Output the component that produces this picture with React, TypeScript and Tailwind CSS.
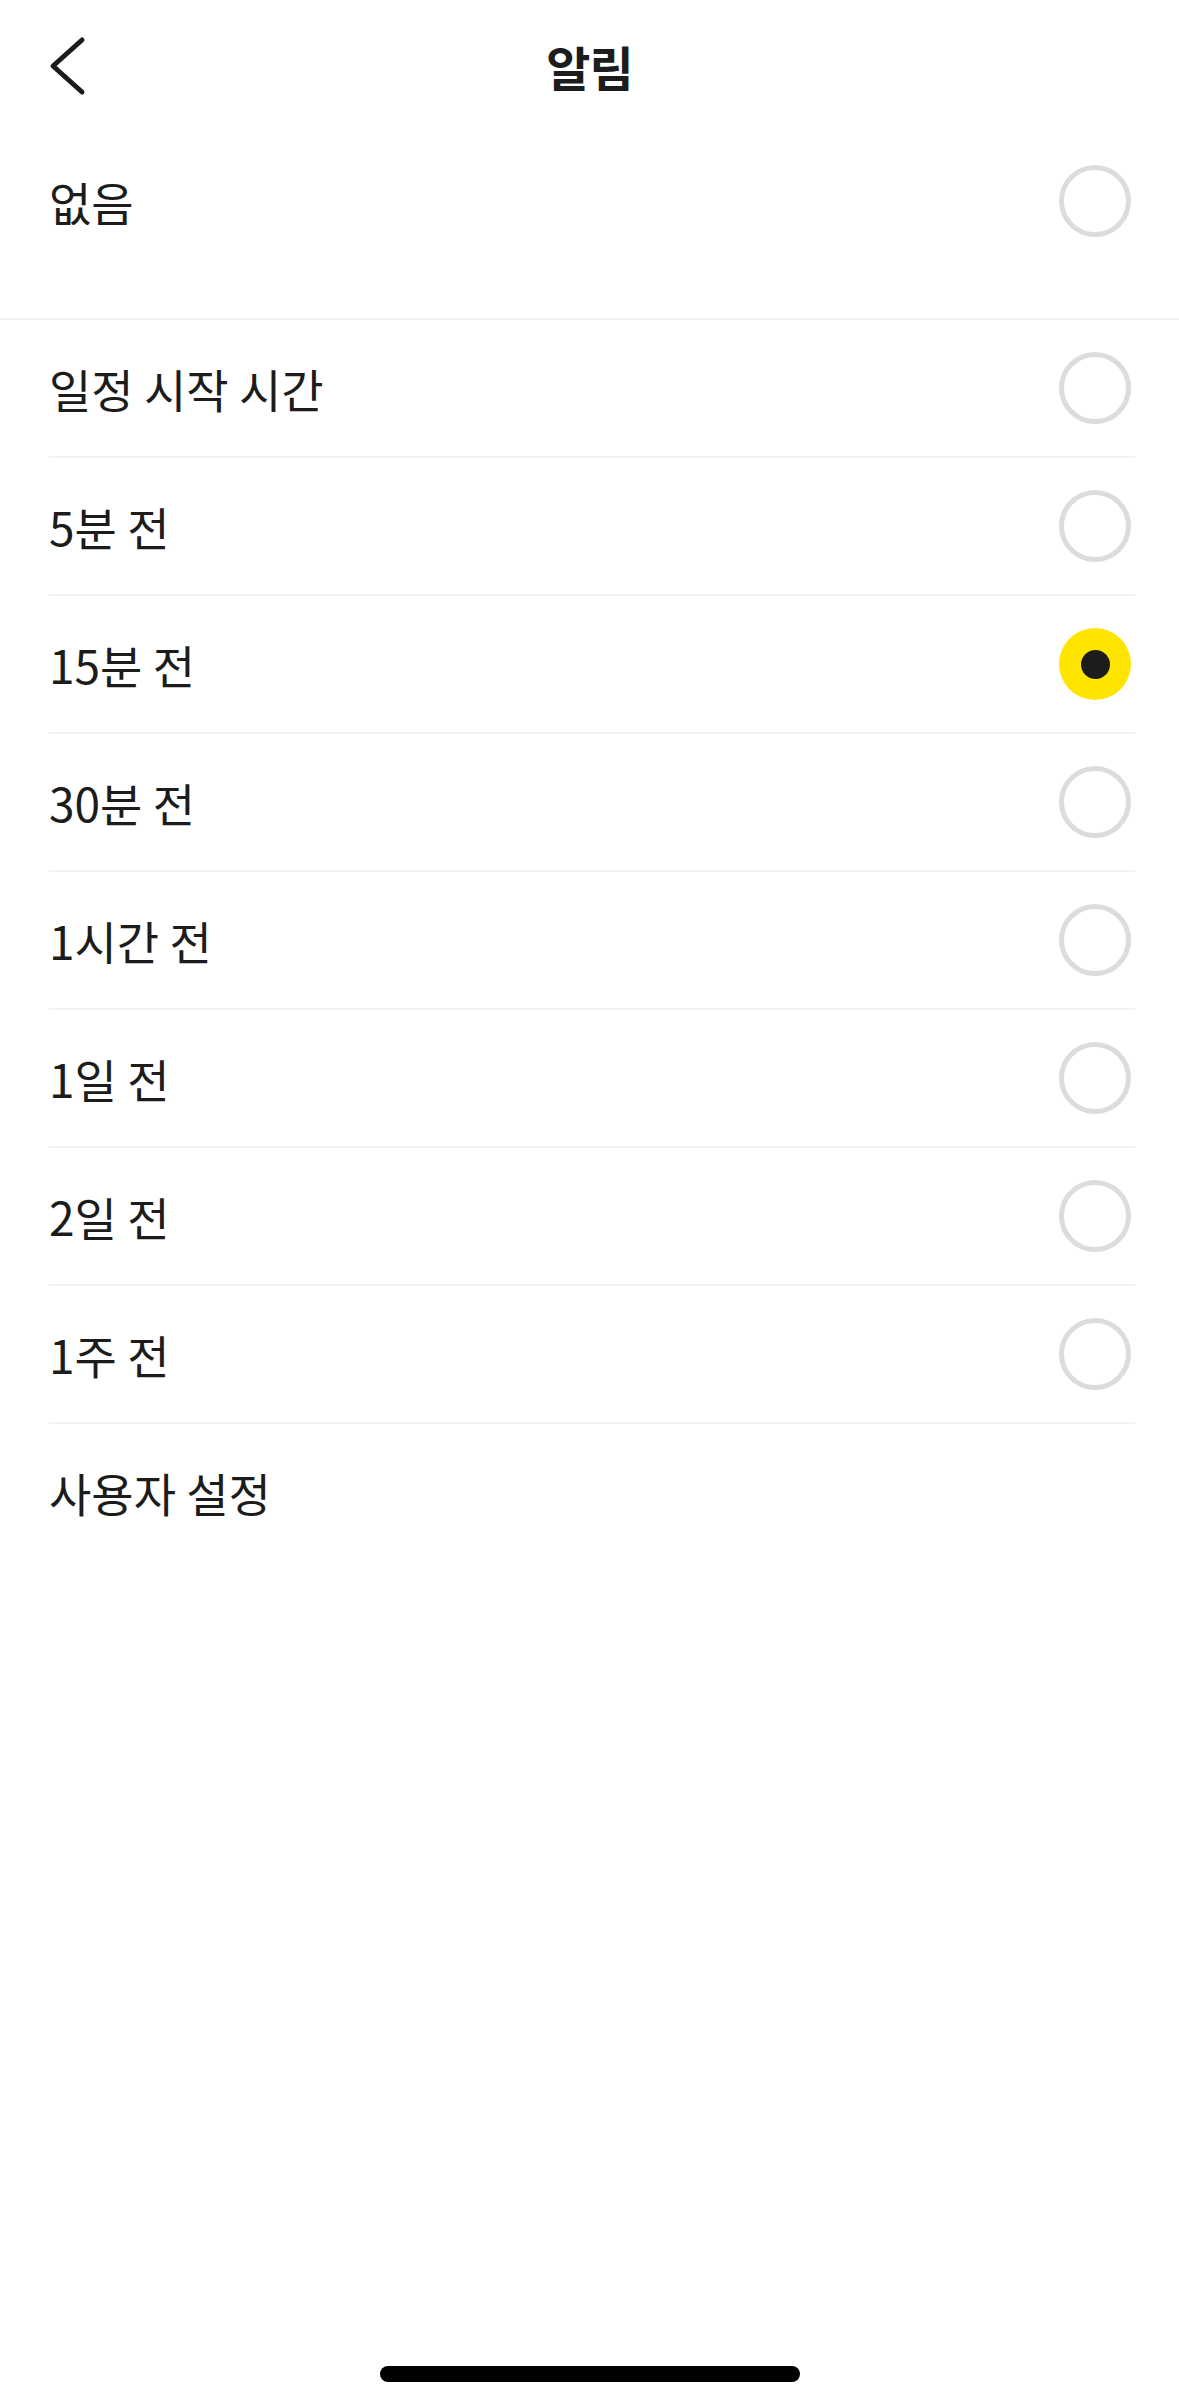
import { useState } from "react";

const options = ["일정 시작 시간", "5분 전", "15분 전", "30분 전", "1시간 전", "1일 전", "2일 전", "1주 전"];

function Radio({ checked }: { checked: boolean }) {
  if (checked) {
    return (
      <div className="w-[72px] h-[72px] rounded-full bg-[#fee500] flex items-center justify-center">
        <div className="w-[29px] h-[29px] rounded-full bg-[#1c1c1c]" />
      </div>
    );
  }
  return <div className="w-[72px] h-[72px] rounded-full border-[5px] border-[#dcdcdc]" />;
}

export default function App() {
  const [selected, setSelected] = useState("15분 전");

  return (
    <div
      className="w-[1179px] h-[2396px] bg-white text-[#1c1c1c] flex flex-col relative"
      style={{ fontFamily: '"Noto Sans CJK KR", "Noto Sans", sans-serif' }}
    >
      {/* header */}
      <div className="h-[132px] flex items-center relative">
        <button className="absolute left-[40px] top-[26px] w-[60px] h-[80px] flex items-center justify-center">
          <svg width="60" height="80" viewBox="0 0 60 80" fill="none">
            <path d="M42 14 L13 40 L42 66" stroke="#1c1c1c" strokeWidth="5" strokeLinecap="round" strokeLinejoin="round" />
          </svg>
        </button>
        <h1 className="flex-1 text-center text-[48px] font-bold tracking-[-1px]">알림</h1>
      </div>

      {/* none */}
      <div className="pb-[48px] border-b-2 border-[#efefef]">
        <button
          onClick={() => setSelected("없음")}
          className="w-full h-[138px] pl-[49px] pr-[48px] flex items-center justify-between"
        >
          <span className="text-[46px]">없음</span>
          <Radio checked={selected === "없음"} />
        </button>
      </div>

      {/* options */}
      <div className="pl-[49px] pr-[44px]">
        {options.map((o) => (
          <button
            key={o}
            onClick={() => setSelected(o)}
            className="w-full h-[138px] pr-[4px] flex items-center justify-between border-b-2 border-[#f3f3f3]"
          >
            <span className="text-[46px]">{o}</span>
            <Radio checked={selected === o} />
          </button>
        ))}
        <div className="h-[137px] flex items-center">
          <span className="text-[46px]">사용자 설정</span>
        </div>
      </div>

      <div className="absolute bottom-[14px] left-[380px] w-[420px] h-[16px] rounded-full bg-black" />
    </div>
  );
}
